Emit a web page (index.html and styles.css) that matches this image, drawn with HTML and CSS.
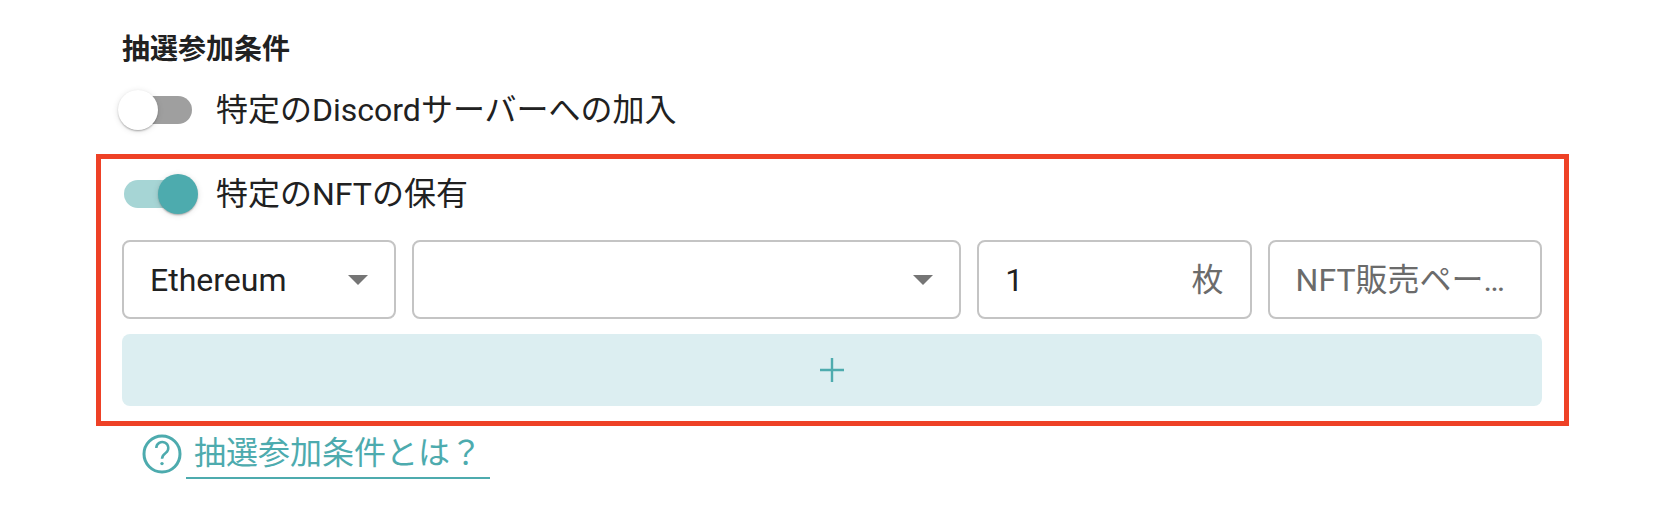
FILE: index.html
```html
<!DOCTYPE html>
<html lang="ja">
<head>
  <meta charset="UTF-8" />
  <meta name="viewport" content="width=device-width, initial-scale=1.0"/>
  <title>抽選参加条件</title>
  <link rel="stylesheet" href="styles.css">
</head>
<body>
  <div class="conditions">
    <h2 class="conditions-title">抽選参加条件</h2>

    <div class="switch-row">
      <span class="switch"><span class="switch-knob"></span></span>
      <span class="switch-label">特定のDiscordサーバーへの加入</span>
    </div>

    <div class="highlight-box">
      <div class="switch-row">
        <span class="switch switch-on"><span class="switch-knob"></span></span>
        <span class="switch-label">特定のNFTの保有</span>
      </div>

      <div class="field-grid">
        <div class="field">
          <span class="field-value">Ethereum</span>
          <span class="select-arrow"></span>
        </div>
        <div class="field field-wide">
          <span class="field-value"></span>
          <span class="select-arrow"></span>
        </div>
        <div class="field">
          <span class="field-value">1</span>
          <span class="field-unit">枚</span>
        </div>
        <div class="field">
          <span class="field-placeholder">NFT販売ペー…</span>
        </div>
      </div>

      <button class="add-button" type="button">
        <svg width="24" height="24" viewBox="0 0 24 24" aria-hidden="true">
          <path d="M12 0v24M0 12h24" fill="none" stroke="#4dabae" stroke-width="2.4"/>
        </svg>
      </button>
    </div>

    <div class="help-row">
      <svg class="help-icon" width="40" height="40" viewBox="0 0 40 40" aria-hidden="true">
        <circle cx="20" cy="20" r="18" fill="none" stroke="#4dabae" stroke-width="3"/>
        <path d="M14.3 14a6 6 0 1 1 9.6 4.8c-2.6 1.9-3.9 3-3.9 6" fill="none" stroke="#4dabae" stroke-width="2.5"/>
        <circle cx="20" cy="29.6" r="1.7" fill="#4dabae"/>
      </svg>
      <a class="help-link" href="#">抽選参加条件とは？</a>
    </div>
  </div>
</body>
</html>
```

FILE: styles.css
```css
* {
  margin: 0;
  padding: 0;
  box-sizing: border-box;
  font-family: Roboto, 'Noto Sans CJK JP', sans-serif;
}

body {
  background-color: #fff;
  color: #212121;
}

.conditions {
  padding: 29px 0 0 122px;
  width: 1569px;
}

.conditions-title {
  font-size: 28px;
  font-weight: 700;
  line-height: 42px;
}

.switch-row {
  display: flex;
  align-items: center;
  height: 60px;
}

.conditions-title + .switch-row {
  margin-top: 9px;
}

.switch {
  position: relative;
  display: block;
  flex: none;
  width: 68px;
  height: 28px;
  margin-left: 2px;
  border-radius: 14px;
  background-color: #9f9f9f;
}

.switch-knob {
  position: absolute;
  top: -6px;
  left: -6px;
  width: 40px;
  height: 40px;
  border-radius: 50%;
  background-color: #fff;
  box-shadow: 0 2px 2px -1px rgba(0, 0, 0, 0.2), 0 1px 2px rgba(0, 0, 0, 0.14), 0 1px 6px rgba(0, 0, 0, 0.12);
}

.switch-on {
  background-color: #a6d5d5;
}

.switch-on .switch-knob {
  left: 34px;
  background-color: #4dabae;
}

.switch-label {
  margin-left: 24px;
  font-size: 32px;
  line-height: 48px;
}

.highlight-box {
  margin: 14px 0 0 -26px;
  padding: 5px 22px 15px 21px;
  border: 5px solid #ee4126;
}

.field-grid {
  display: grid;
  grid-template-columns: 1fr 2fr 1fr 1fr;
  gap: 16px;
  margin-top: 16px;
}

.field {
  display: flex;
  align-items: center;
  justify-content: space-between;
  height: 79px;
  padding: 0 26px;
  border: 2px solid #c4c4c4;
  border-radius: 8px;
  font-size: 32px;
  line-height: 40px;
  min-width: 0;
}

.select-arrow {
  flex: none;
  width: 0;
  height: 0;
  border-left: 10px solid transparent;
  border-right: 10px solid transparent;
  border-top: 10px solid #757575;
}

.field-unit,
.field-placeholder {
  color: #6b6b6b;
}

.field-placeholder {
  white-space: nowrap;
}

.add-button {
  display: flex;
  align-items: center;
  justify-content: center;
  width: 100%;
  height: 72px;
  margin-top: 15px;
  border: none;
  border-radius: 8px;
  background-color: #dceef1;
}

.help-row {
  display: flex;
  align-items: flex-start;
  margin: 3px 0 0 20px;
}

.help-icon {
  flex: none;
  margin-top: 5px;
}

.help-link {
  margin-left: 4px;
  padding: 0 8px;
  border-bottom: 2px solid #4dabae;
  color: #4dabae;
  font-size: 32px;
  line-height: 48px;
  text-decoration: none;
}
```
